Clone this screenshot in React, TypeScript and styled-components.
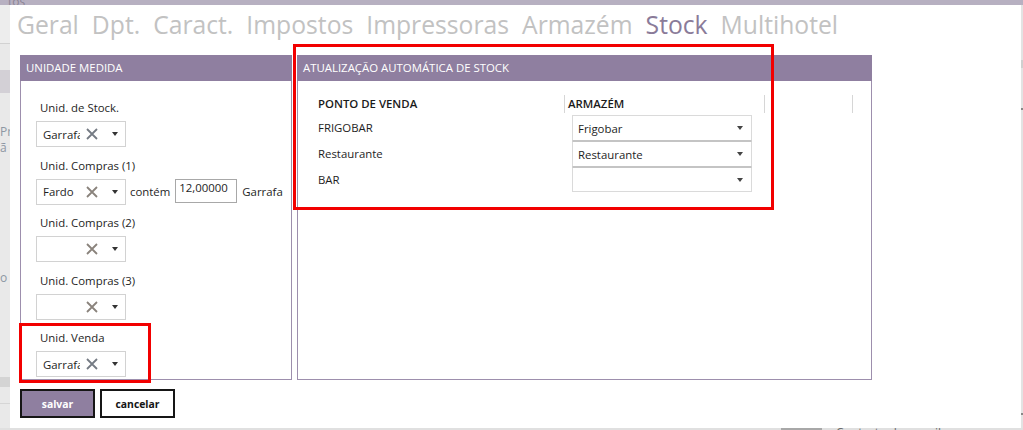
import React from "react";
import styled, { createGlobalStyle } from "styled-components";

const GlobalStyle = createGlobalStyle`
  html, body { margin: 0; padding: 0; }
  body {
    background: #e6e6e6;
    font-family: "Open Sans", "Noto Sans", sans-serif;
    font-size: 11.4px;
    color: #1e1e1e;
  }
`;

const Screen = styled.div`
  position: relative;
  width: 1023px;
  height: 430px;
  overflow: hidden;
  display: flex;
  flex-direction: column;
  background: #e6e6e6;
`;

const TopStrip = styled.div`
  height: 5px;
  flex: none;
  background: #b7b0c1;
  overflow: hidden;
  padding-left: 8px;
  font-size: 12px;
  line-height: 4px;
  color: #8b8494;
`;

const Middle = styled.div`
  display: flex;
  height: 423px;
  flex: none;
`;

const LeftStrip = styled.div`
  width: 10px;
  flex: none;
  display: flex;
  flex-direction: column;
  overflow: hidden;
  background: #e9e9e9;
`;

const StripBlock = styled.div<{ $h: number; $bg?: string; $line?: string }>`
  height: ${(p) => p.$h}px;
  flex: none;
  background: ${(p) => p.$bg ?? "transparent"};
  border-bottom: ${(p) => (p.$line ? `1px solid ${p.$line}` : "none")};
  font-size: 12px;
  line-height: ${(p) => p.$h}px;
  color: #8d97a3;
  white-space: nowrap;
  overflow: hidden;
`;

const RightStrip = styled.div`
  width: 2px;
  flex: none;
  background: #e3e3e3;
  display: flex;
  flex-direction: column;
`;

const RightMark = styled.div<{ $h: number; $c?: string }>`
  height: ${(p) => p.$h}px;
  flex: none;
  background: ${(p) => p.$c ?? "transparent"};
`;

const BottomStrip = styled.div`
  height: 2px;
  flex: none;
  display: flex;
  background: #e0e0e0;
  overflow: hidden;
`;

const BottomBar = styled.div<{ $w: number; $c?: string }>`
  width: ${(p) => p.$w}px;
  flex: none;
  background: ${(p) => p.$c ?? "transparent"};
`;

const BottomText = styled.div`
  font-size: 12px;
  line-height: 10px;
  color: #6a6a6a;
  white-space: nowrap;
`;

const Dialog = styled.div`
  width: 1011px;
  flex: none;
  background: #ffffff;
  padding-top: 3px;
  box-sizing: border-box;
  display: flex;
  flex-direction: column;
`;

const Tabs = styled.div`
  display: flex;
  gap: 13px;
  padding-left: 7px;
  height: 34px;
  align-items: center;
`;

const Tab = styled.span<{ $active?: boolean }>`
  font-size: 24.7px;
  line-height: 34px;
  color: ${(p) => (p.$active ? "#8a7b99" : "#c2c2c2")};
  white-space: nowrap;
`;

const Content = styled.div`
  display: flex;
  gap: 5px;
  padding-left: 10px;
  margin-top: 13px;
`;

const Panel = styled.section<{ $w: number }>`
  width: ${(p) => p.$w}px;
  height: 325px;
  box-sizing: border-box;
  border: 1px solid #9d8fad;
  border-top: none;
  display: flex;
  flex-direction: column;
`;

const PanelHeader = styled.header`
  height: 26px;
  flex: none;
  margin: 0 -1px;
  padding-left: 6px;
  background: #8f7fa0;
  color: #ffffff;
  font-size: 11.4px;
  line-height: 26px;
  white-space: nowrap;
`;

const FieldList = styled.div`
  padding: 17px 0 0 15px;
  display: flex;
  flex-direction: column;
  gap: 8.5px;
`;

const Field = styled.div`
  display: flex;
  flex-direction: column;
  gap: 3px;
`;

const Label = styled.div`
  line-height: 20px;
  height: 20px;
  padding-left: 4px;
  color: #1e1e1e;
`;

const ControlRow = styled.div`
  display: flex;
  align-items: center;
  height: 26px;
`;

const Combo = styled.div`
  width: 90px;
  height: 26px;
  box-sizing: border-box;
  border: 1px solid #d2d2d2;
  display: flex;
  align-items: center;
  padding-left: 6px;
  flex: none;
  background: #fff;
`;

const ComboValue = styled.span`
  width: 37px;
  overflow: hidden;
  white-space: nowrap;
  flex: none;
  color: #1e1e1e;
`;

const ClearIcon = styled.svg`
  width: 12px;
  height: 12px;
  margin-left: 6px;
  flex: none;
`;

const Caret = styled.span<{ $c?: string }>`
  width: 0;
  height: 0;
  border-left: 3.5px solid transparent;
  border-right: 3.5px solid transparent;
  border-top: 4px solid ${(p) => p.$c ?? "#333"};
  flex: none;
`;

const ComboCaret = styled(Caret)`
  margin-left: 14px;
`;

const Inline = styled.span<{ $ml: number }>`
  margin-left: ${(p) => p.$ml}px;
  white-space: nowrap;
  color: #1e1e1e;
`;

const NumberInput = styled.div`
  align-self: flex-start;
  width: 62px;
  height: 24px;
  box-sizing: border-box;
  border: 1px solid #a8a8a8;
  margin-left: 5px;
  padding: 1px 0 0 3px;
  line-height: 14px;
  color: #1e1e1e;
`;

const StockBody = styled.div`
  padding: 14px 0 0 20px;
`;

const StockGrid = styled.div`
  display: grid;
  grid-template-columns: 247px 200px 88px;
  grid-template-rows: 20px;
  grid-auto-rows: 26px;
`;

const HeadCell = styled.div<{ $pad?: number }>`
  height: 18px;
  line-height: 18px;
  border-right: 1px solid #d6d6d6;
  padding-left: ${(p) => p.$pad ?? 0}px;
  font-weight: 600;
  font-size: 11.4px;
  color: #1a1a1a;
  white-space: nowrap;
`;

const RowLabel = styled.div`
  line-height: 26px;
  color: #1e1e1e;
  grid-column: 1;
`;

const SelectCell = styled.div`
  grid-column: 2;
  padding-left: 7px;
`;

const Select = styled.div<{ $first?: boolean; $last?: boolean }>`
  width: 180px;
  height: ${(p) => (p.$last ? 25 : 26)}px;
  box-sizing: border-box;
  border: 1px solid #dadada;
  border-top-color: ${(p) => (p.$first ? "#dadada" : "#c4c4c4")};
  border-bottom-color: ${(p) => (p.$last ? "#dadada" : "#c4c4c4")};
  display: flex;
  align-items: center;
  justify-content: space-between;
  padding: 0 8px 0 5px;
  color: #1e1e1e;
`;

const Actions = styled.div`
  display: flex;
  gap: 5px;
  padding-left: 10px;
  margin-top: 9px;
`;

const Button = styled.button<{ $primary?: boolean }>`
  width: 75px;
  height: 29px;
  box-sizing: border-box;
  border: 2px solid #161616;
  background: ${(p) => (p.$primary ? "#8f7fa0" : "#ffffff")};
  color: ${(p) => (p.$primary ? "#ffffff" : "#151515")};
  font-family: "Open Sans", sans-serif;
  font-weight: 700;
  font-size: 10.4px;
  padding: 0;
  cursor: pointer;
`;

const Annotation = styled.div<{ $x: number; $y: number; $w: number; $h: number }>`
  position: absolute;
  left: ${(p) => p.$x}px;
  top: ${(p) => p.$y}px;
  width: ${(p) => p.$w}px;
  height: ${(p) => p.$h}px;
  box-sizing: border-box;
  border: 3px solid #f20000;
  pointer-events: none;
`;

const X = ({ color = "#7d7d7d" }: { color?: string }) => (
  <ClearIcon viewBox="0 0 12 12">
    <path d="M1 1 L11 11 M11 1 L1 11" stroke={color} strokeWidth="1.8" fill="none" />
  </ClearIcon>
);

const UnitCombo = ({ value, xColor }: { value?: string; xColor?: string }) => (
  <Combo>
    <ComboValue>{value ?? "\u00a0"}</ComboValue>
    <X color={xColor} />
    <ComboCaret />
  </Combo>
);

const tabs = ["Geral", "Dpt.", "Caract.", "Impostos", "Impressoras", "Armazém", "Stock", "Multihotel"];

const rows: { pv: string; arm: string }[] = [
  { pv: "FRIGOBAR", arm: "Frigobar" },
  { pv: "Restaurante", arm: "Restaurante" },
  { pv: "BAR", arm: "" },
];

export default function App() {
  return (
    <>
      <GlobalStyle />
      <Screen>
        <TopStrip>tos</TopStrip>
        <Middle>
          <LeftStrip>
            <StripBlock $h={38} $bg="#ededed" $line="#d2d2d2" />
            <StripBlock $h={26} $bg="#e9e9e9" />
            <StripBlock $h={23} $bg="#d3d0d6" />
            <StripBlock $h={30} />
            <StripBlock $h={18}>Pr</StripBlock>
            <StripBlock $h={14}>ã -</StripBlock>
            <StripBlock $h={116} />
            <StripBlock $h={14}>o -</StripBlock>
            <StripBlock $h={92} />
            <StripBlock $h={10} $bg="#d4d4d4" />
            <StripBlock $h={16} $line="#d6d6d6" />
          </LeftStrip>
          <Dialog>
            <Tabs>
              {tabs.map((t) => (
                <Tab key={t} $active={t === "Stock"}>
                  {t}
                </Tab>
              ))}
            </Tabs>
            <Content>
              <Panel $w={272}>
                <PanelHeader>UNIDADE MEDIDA</PanelHeader>
                <FieldList>
                  <Field>
                    <Label>Unid. de Stock.</Label>
                    <ControlRow>
                      <UnitCombo value="Garrafa" xColor="#757b84" />
                    </ControlRow>
                  </Field>
                  <Field>
                    <Label>Unid. Compras (1)</Label>
                    <ControlRow>
                      <UnitCombo value="Fardo" xColor="#8a837c" />
                      <Inline $ml={4}>contém</Inline>
                      <NumberInput>12,00000</NumberInput>
                      <Inline $ml={5}>Garrafa</Inline>
                    </ControlRow>
                  </Field>
                  <Field>
                    <Label>Unid. Compras (2)</Label>
                    <ControlRow>
                      <UnitCombo xColor="#8a837c" />
                    </ControlRow>
                  </Field>
                  <Field>
                    <Label>Unid. Compras (3)</Label>
                    <ControlRow>
                      <UnitCombo xColor="#8a837c" />
                    </ControlRow>
                  </Field>
                  <Field>
                    <Label>Unid. Venda</Label>
                    <ControlRow>
                      <UnitCombo value="Garrafa" xColor="#757b84" />
                    </ControlRow>
                  </Field>
                </FieldList>
              </Panel>
              <Panel $w={575}>
                <PanelHeader>ATUALIZAÇÃO AUTOMÁTICA DE STOCK</PanelHeader>
                <StockBody>
                  <StockGrid>
                    <HeadCell>PONTO DE VENDA</HeadCell>
                    <HeadCell $pad={3}>ARMAZÉM</HeadCell>
                    <HeadCell />
                    {rows.map((r, i) => (
                      <React.Fragment key={r.pv}>
                        <RowLabel>{r.pv}</RowLabel>
                        <SelectCell>
                          <Select $first={i === 0} $last={i === rows.length - 1}>
                            <span>{r.arm}</span>
                            <Caret $c="#444" />
                          </Select>
                        </SelectCell>
                      </React.Fragment>
                    ))}
                  </StockGrid>
                </StockBody>
              </Panel>
            </Content>
            <Actions>
              <Button $primary>salvar</Button>
              <Button>cancelar</Button>
            </Actions>
          </Dialog>
          <RightStrip>
            <RightMark $h={55} />
            <RightMark $h={8} $c="#cfcfcf" />
            <RightMark $h={40} />
            <RightMark $h={2} $c="#888" />
            <RightMark $h={303} />
            <RightMark $h={2} $c="#888" />
          </RightStrip>
        </Middle>
        <BottomStrip>
          <BottomBar $w={781} />
          <BottomBar $w={41} $c="#a8a8a8" />
          <BottomBar $w={14} />
          <BottomText>Contacto de e-mail:</BottomText>
        </BottomStrip>
        <Annotation $x={293} $y={44} $w={481} $h={166} />
        <Annotation $x={19} $y={323} $w={132} $h={60} />
      </Screen>
    </>
  );
}
